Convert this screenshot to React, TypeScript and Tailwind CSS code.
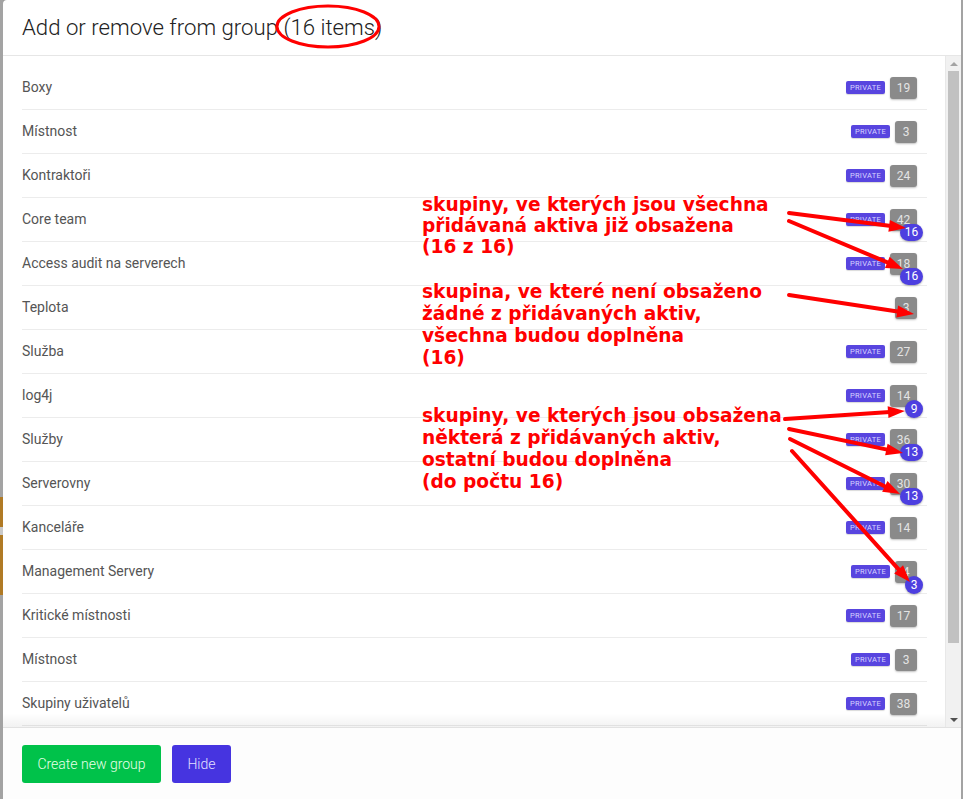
import React from "react";

type Row = { name: string; priv: boolean; count: number; extra?: number };

const rows: Row[] = [
  { name: "Boxy", priv: true, count: 19 },
  { name: "Místnost", priv: true, count: 3 },
  { name: "Kontraktoři", priv: true, count: 24 },
  { name: "Core team", priv: true, count: 42, extra: 16 },
  { name: "Access audit na serverech", priv: true, count: 18, extra: 16 },
  { name: "Teplota", priv: false, count: 3 },
  { name: "Služba", priv: true, count: 27 },
  { name: "log4j", priv: true, count: 14, extra: 9 },
  { name: "Služby", priv: true, count: 36, extra: 13 },
  { name: "Serverovny", priv: true, count: 30, extra: 13 },
  { name: "Kanceláře", priv: true, count: 14 },
  { name: "Management Servery", priv: true, count: 4, extra: 3 },
  { name: "Kritické místnosti", priv: true, count: 17 },
  { name: "Místnost", priv: true, count: 3 },
  { name: "Skupiny uživatelů", priv: true, count: 38 },
];

function Arrow({ x1, y1, x2, y2 }: { x1: number; y1: number; x2: number; y2: number }) {
  const dx = x2 - x1;
  const dy = y2 - y1;
  const len = Math.sqrt(dx * dx + dy * dy);
  const ux = dx / len;
  const uy = dy / len;
  const hl = 17;
  const hw = 6;
  const bx = x2 - ux * hl;
  const by = y2 - uy * hl;
  const p1 = `${bx - uy * hw},${by + ux * hw}`;
  const p2 = `${bx + uy * hw},${by - ux * hw}`;
  return (
    <g>
      <line x1={x1} y1={y1} x2={bx + ux * 2} y2={by + uy * 2} stroke="#ff0000" strokeWidth={4} strokeLinecap="round" />
      <polygon points={`${x2},${y2} ${p1} ${p2}`} fill="#ff0000" />
    </g>
  );
}

export default function App() {
  return (
    <div
      className="relative w-[963px] h-[799px] overflow-hidden flex bg-[#9c9c9c]"
      style={{ fontFamily: "Roboto, 'Liberation Sans', sans-serif" }}
    >
      {/* left backdrop strip */}
      <div className="w-[3px] flex flex-col">
        <div className="h-[497px] bg-[#a3a3a3]" />
        <div className="h-[30px] bg-[#b07a25]" />
        <div className="h-[8px] bg-[#c9c9c9]" />
        <div className="h-[60px] bg-[#b07a25]" />
        <div className="flex-1 bg-[#a3a3a3]" />
      </div>

      {/* modal */}
      <div className="w-[958px] h-full bg-white rounded-tl-[4px] flex flex-col">
        {/* header */}
        <div className="h-[56px] border-b border-[#e6e6e6] flex items-center pl-[19px] shrink-0">
          <h1 className="text-[22.2px] font-light text-[#222] leading-none">
            Add or remove from group (16 items)
          </h1>
        </div>

        {/* body */}
        <div className="flex-1 flex min-h-0 relative">
          <div className="flex-1 pl-[19px] pr-[18px] pt-[10px] overflow-hidden">
            {rows.map((r, i) => (
              <div
                key={i}
                className="h-[44px] border-b border-[#ececec] flex items-center justify-between pr-[10px]"
              >
                <span className="text-[14px] text-[#555] font-normal">{r.name}</span>
                <div className="flex items-center gap-[5px]">
                  {r.priv && (
                    <span className="h-[13px] w-[39px] text-center rounded-[2px] bg-[#5845df] text-[#d8d4ff] text-[7.5px] leading-[13px] tracking-[0.3px] shadow-[0_1px_1px_rgba(0,0,0,0.15)]">
                      PRIVATE
                    </span>
                  )}
                  <span
                    className={`relative h-[22px] rounded-[3px] bg-[#8a8a8a] text-[#e4e4e4] text-[12px] flex items-center justify-center shadow-[0_1px_2px_rgba(0,0,0,0.25)] ${
                      r.count >= 10 ? "w-[27px]" : "w-[22px]"
                    }`}
                  >
                    {r.count}
                    {r.extra !== undefined && (
                      <span
                        className={`absolute top-[15px] right-[-6px] h-[17px] rounded-full bg-[#4d3fe0] text-white text-[12px] flex items-center justify-center shadow-[0_1px_2px_rgba(0,0,0,0.3)] ${
                          r.extra >= 10 ? "w-[23px]" : "w-[18px] h-[18px]"
                        }`}
                      >
                        {r.extra}
                      </span>
                    )}
                  </span>
                </div>
              </div>
            ))}
          </div>
          {/* scrollbar */}
          <div className="w-[16px] bg-[#f1f1f1] border-l border-[#e8e8e8] flex flex-col items-center">
            <div className="h-[15px] flex items-center justify-center">
              <div className="w-0 h-0 border-l-[4px] border-r-[4px] border-b-[4px] border-l-transparent border-r-transparent border-b-[#a3a3a3]" />
            </div>
            <div className="w-[11px] h-[572px] bg-[#c1c1c1]" />
            <div className="flex-1" />
            <div className="h-[15px] flex items-center justify-center">
              <div className="w-0 h-0 border-l-[4px] border-r-[4px] border-t-[4px] border-l-transparent border-r-transparent border-t-[#505050]" />
            </div>
          </div>
          <div className="absolute left-0 right-[16px] bottom-0 h-[14px] bg-gradient-to-b from-transparent to-[rgba(0,0,0,0.05)] pointer-events-none" />
        </div>

        {/* footer */}
        <div className="h-[72px] shrink-0 bg-[#fdfdfd] border-t border-[#e2e2e2] flex items-start gap-[11px] pl-[19px] pt-[17px]">
          <button className="h-[38px] w-[139px] rounded-[3px] bg-[#00c24a] text-[#e8ffe8] text-[14px] font-light">
            Create new group
          </button>
          <button className="h-[38px] w-[59px] rounded-[3px] bg-[#4634e0] text-[#e4e0ff] text-[14px] font-light">
            Hide
          </button>
        </div>
      </div>

      {/* right backdrop strip */}
      <div className="w-[2px] bg-[#a3a3a3]" />

      {/* annotations */}
      <svg className="absolute left-0 top-0 pointer-events-none" width={963} height={799}>
        <ellipse cx={328} cy={26.5} rx={51} ry={20.5} fill="none" stroke="#ff0000" strokeWidth={3} />
        <Arrow x1={789} y1={213} x2={906} y2={228} />
        <Arrow x1={789} y1={221} x2={903} y2={269} />
        <Arrow x1={789} y1={295} x2={914} y2={314} />
        <Arrow x1={785} y1={419} x2={905} y2={411} />
        <Arrow x1={789} y1={429} x2={903} y2={453} />
        <Arrow x1={790} y1={439} x2={900} y2={494} />
        <Arrow x1={792} y1={451} x2={910} y2={582} />
      </svg>
      <div
        className="absolute left-[422px] top-[194px] text-[#ff0000] text-[18.6px] font-bold leading-[21px] whitespace-pre pointer-events-none"
        style={{ fontFamily: "'DejaVu Sans', sans-serif" }}
      >
        {"skupiny, ve kterých jsou všechna\npřidávaná aktiva již obsažena\n(16 z 16)"}
      </div>
      <div
        className="absolute left-[422px] top-[281px] text-[#ff0000] text-[18.6px] font-bold leading-[22px] whitespace-pre pointer-events-none"
        style={{ fontFamily: "'DejaVu Sans', sans-serif" }}
      >
        {"skupina, ve které není obsaženo\nžádné z přidávaných aktiv,\nvšechna budou doplněna\n(16)"}
      </div>
      <div
        className="absolute left-[422px] top-[405px] text-[#ff0000] text-[18.6px] font-bold leading-[22px] whitespace-pre pointer-events-none"
        style={{ fontFamily: "'DejaVu Sans', sans-serif" }}
      >
        {"skupiny, ve kterých jsou obsažena\nněkterá z přidávaných aktiv,\nostatní budou doplněna\n(do počtu 16)"}
      </div>
    </div>
  );
}
